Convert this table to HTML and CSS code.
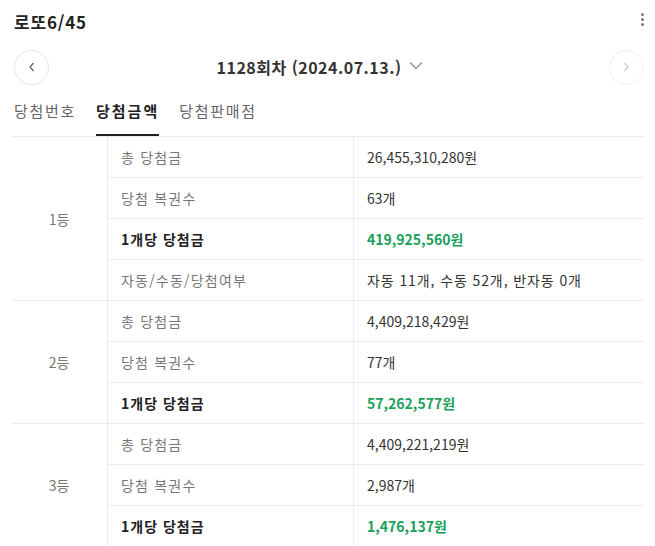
FILE: index.html
```html
<!DOCTYPE html>
<html lang="ko">
<head>
<meta charset="utf-8">
<link rel="stylesheet" href="styles.css">
</head>
<body>
<div class="page">
  <header class="top">
    <h1 class="title">로또6/45</h1>
    <span class="kebab"><i></i><i></i><i></i></span>
  </header>
  <div class="nav">
    <button class="circle" aria-label="이전">
      <svg width="10" height="12" viewBox="0 0 10 12"><path d="M6.5 2 L3 6 L6.5 10" fill="none" stroke="#666" stroke-width="1.3"/></svg>
    </button>
    <div class="draw">1128회차 (2024.07.13.)
      <svg class="chev" width="14" height="9" viewBox="0 0 14 9"><path d="M1 1.5 L7 7.5 L13 1.5" fill="none" stroke="#888" stroke-width="1.2"/></svg>
    </div>
    <button class="circle next" aria-label="다음">
      <svg width="10" height="12" viewBox="0 0 10 12"><path d="M3.5 2 L7 6 L3.5 10" fill="none" stroke="#ccc" stroke-width="1.3"/></svg>
    </button>
  </div>
  <nav class="tabs">
    <span class="tab">당첨번호</span>
    <span class="tab active">당첨금액</span>
    <span class="tab">당첨판매점</span>
  </nav>
  <div class="table">
    <div class="group">
      <div class="rank">1등</div>
      <div class="rows">
        <div class="row"><div class="lab">총 당첨금</div><div class="val">26,455,310,280원</div></div>
        <div class="row"><div class="lab">당첨 복권수</div><div class="val">63개</div></div>
        <div class="row"><div class="lab strong">1개당 당첨금</div><div class="val win">419,925,560원</div></div>
        <div class="row"><div class="lab">자동/수동/당첨여부</div><div class="val ko">자동 11개, 수동 52개, 반자동 0개</div></div>
      </div>
    </div>
    <div class="group">
      <div class="rank">2등</div>
      <div class="rows">
        <div class="row"><div class="lab">총 당첨금</div><div class="val">4,409,218,429원</div></div>
        <div class="row"><div class="lab">당첨 복권수</div><div class="val">77개</div></div>
        <div class="row"><div class="lab strong">1개당 당첨금</div><div class="val win">57,262,577원</div></div>
      </div>
    </div>
    <div class="group">
      <div class="rank">3등</div>
      <div class="rows">
        <div class="row"><div class="lab">총 당첨금</div><div class="val">4,409,221,219원</div></div>
        <div class="row"><div class="lab">당첨 복권수</div><div class="val">2,987개</div></div>
        <div class="row"><div class="lab strong">1개당 당첨금</div><div class="val win">1,476,137원</div></div>
      </div>
    </div>
  </div>
</div>
</body>
</html>
```
FILE: styles.css
```css
* { box-sizing: border-box; }
html, body { margin: 0; padding: 0; background: #fff; }
body {
  font-family: "Noto Sans CJK KR", "Noto Sans", sans-serif;
  color: #333;
  overflow: hidden;
}
.page { width: 655px; }
.top {
  height: 44px;
  display: flex;
  align-items: center;
  justify-content: space-between;
  padding: 0 11px 0 14px;
}
.title {
  margin: 0;
  font-size: 17px;
  font-weight: 700;
  color: #222;
  letter-spacing: 0.8px;
  line-height: 1;
  transform: translateY(-1px);
}
.kebab {
  display: flex;
  flex-direction: column;
  gap: 2px;
  transform: translateY(-3px);
}
.kebab i {
  display: block;
  width: 3px;
  height: 3px;
  background: #777;
  border-radius: 50%;
}
.nav {
  height: 46px;
  display: flex;
  align-items: center;
  justify-content: space-between;
  padding: 0 11px 0 14px;
}
.circle {
  width: 35px;
  height: 35px;
  border-radius: 50%;
  border: 1px solid #e6e6e6;
  background: #fff;
  padding: 0;
  display: flex;
  align-items: center;
  justify-content: center;
}
.circle.next { border-color: #efefef; }
.draw {
  font-size: 16px;
  font-weight: 700;
  color: #333;
  display: flex;
  align-items: center;
  gap: 8px;
  margin-left: -18px;
  letter-spacing: 0.5px;
}
.chev { margin-top: -3px; }
.tabs {
  height: 46px;
  display: flex;
  gap: 20px;
  padding: 0 14px;
}
.tab {
  font-size: 15px;
  color: #666;
  display: flex;
  align-items: center;
  height: 46px;
  padding-bottom: 6px;
  letter-spacing: 1.7px;
}
.tab.active {
  color: #222;
  font-weight: 700;
  border-bottom: 2px solid #222;
  padding-bottom: 4px;
  letter-spacing: 2px;
}
.table {
  margin: 0 11px 0 12px;
  border-top: 1px solid #ececec;
  font-size: 14px;
}
.group {
  display: flex;
  border-bottom: 1px solid #ececec;
}
.rank {
  width: 96px;
  flex: none;
  display: flex;
  align-items: center;
  justify-content: center;
  color: #777;
  border-right: 1px solid #ececec;
  padding-right: 1px;
}
.rows { flex: 1; }
.row {
  display: flex;
  height: 41px;
  border-bottom: 1px solid #ececec;
}
.row:last-child { height: 40px; border-bottom: 0; }
.lab {
  width: 246px;
  flex: none;
  display: flex;
  align-items: center;
  padding-left: 13px;
  color: #777;
  border-right: 1px solid #ececec;
  letter-spacing: 1.2px;
}
.lab.strong { color: #222; font-weight: 700; letter-spacing: 1px; }
.val {
  flex: 1;
  display: flex;
  align-items: center;
  padding-left: 13px;
  color: #333;
}
.val.ko { letter-spacing: 0.9px; }
.val.win { color: #1aa05a; font-weight: 700; }
```
